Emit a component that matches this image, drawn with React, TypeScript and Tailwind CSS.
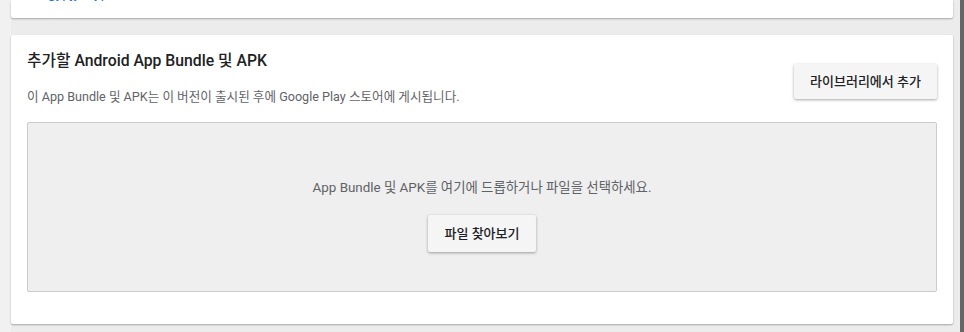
export default function App() {
  return (
    <div
      className="flex h-[332px] w-[964px] overflow-hidden bg-[#ececec] text-[#202124]"
      style={{ fontFamily: 'Roboto, "Noto Sans CJK KR", sans-serif' }}
    >
      <div className="w-[11px] shrink-0 bg-[#f1f1f1]" />
      <div className="flex w-[942px] shrink-0 flex-col">
        <div className="h-[18px] overflow-hidden rounded-b-[2px] bg-white shadow-[0_1px_2px_rgba(0,0,0,0.3)]">
          <div className="-mt-[15px] pl-[16px] text-[14px] leading-[16px] text-[#1a73e8]">
            &nbsp;&nbsp;&nbsp;&nbsp;&nbsp;&nbsp;gypjy&nbsp;&nbsp;&nbsp;&nbsp;yp
          </div>
        </div>
        <div className="mt-[17px] h-[289px] rounded-[2px] bg-white px-[16px] shadow-[0_1px_2px_rgba(0,0,0,0.3)]">
          <div className="flex items-start justify-between">
            <div className="pt-[16px]">
              <h2 className="text-[15.75px] font-medium leading-[20px] text-[#202124]">
                추가할 Android App Bundle 및 APK
              </h2>
              <p className="mt-[19px] text-[12.6px] leading-[14px] text-[#5f6368]">
                이 App Bundle 및 APK는 이 버전이 출시된 후에 Google Play 스토어에 게시됩니다.
              </p>
            </div>
            <button className="mt-[29px] h-[35px] w-[143px] rounded-[2px] bg-[#f5f5f5] text-[13px] font-medium text-[#202124] shadow-[0_1px_3px_rgba(0,0,0,0.35)]">
              라이브러리에서 추가
            </button>
          </div>
          <div className="mt-[18px] flex h-[170px] flex-col items-center rounded-[2px] border border-[#cccccc] bg-[#efefef]">
            <p className="mt-[57px] text-[13.4px] leading-[16px] text-[#5f6368]">
              App Bundle 및 APK를 여기에 드롭하거나 파일을 선택하세요.
            </p>
            <button className="mt-[19px] h-[37px] w-[108px] rounded-[2px] bg-[#f5f5f5] text-[13px] font-medium text-[#202124] shadow-[0_1px_3px_rgba(0,0,0,0.35)]">
              파일 찾아보기
            </button>
          </div>
        </div>
      </div>
      <div className="w-[7px] shrink-0" />
      <div className="w-[4px] shrink-0 bg-[#666666]" />
    </div>
  );
}
